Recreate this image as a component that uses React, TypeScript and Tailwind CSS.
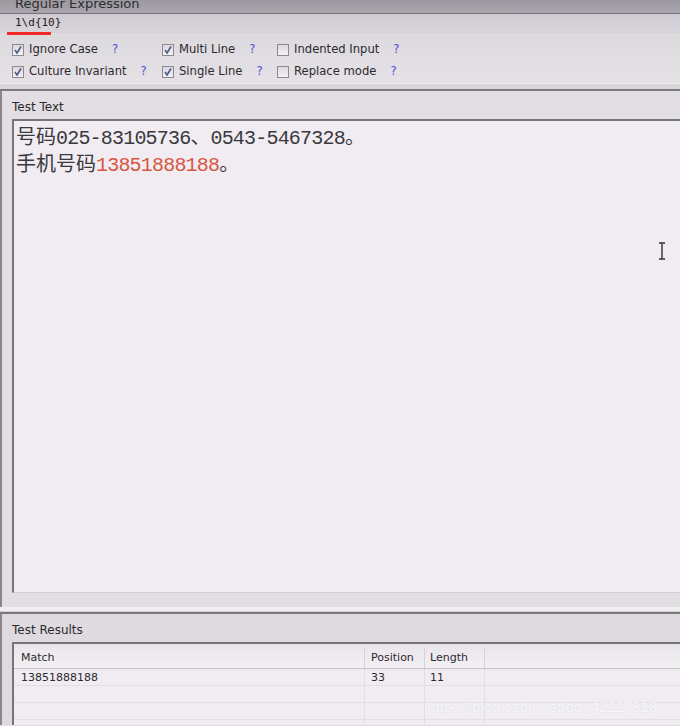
import React from "react";

const ui = "font-['DejaVu_Sans','Liberation_Sans',sans-serif]";

const options = [
  [
    { label: "Ignore Case", checked: true },
    { label: "Multi Line", checked: true },
    { label: "Indented Input", checked: false },
  ],
  [
    { label: "Culture Invariant", checked: true },
    { label: "Single Line", checked: true },
    { label: "Replace mode", checked: false },
  ],
];

const colX = ["w-[150px]", "w-[115px]", "w-[140px]"];

const Check = ({ checked }: { checked: boolean }) => (
  <span className="flex h-[12px] w-[12px] shrink-0 items-center justify-center border border-[#8d8991] bg-gradient-to-b from-[#dcd8de] to-[#f4f2f5]">
    {checked ? (
      <svg width="10" height="10" viewBox="0 0 10 10">
        <path d="M2 5 L4 8 L8 1.5" fill="none" stroke="#4a5a8c" strokeWidth="1.6" />
      </svg>
    ) : null}
  </span>
);

const rows = [
  { match: "13851888188", pos: "33", len: "11" },
  { match: "", pos: "", len: "" },
  { match: "", pos: "", len: "" },
  { match: "", pos: "", len: "" },
];

// half-width parts of the test text
const Ascii = ({ children, red }: { children: React.ReactNode; red?: boolean }) => (
  <span className={`font-['Liberation_Mono',monospace] tracking-[-0.8px] ${red ? "text-[#d8553f]" : ""}`}>
    {children}
  </span>
);

export default function App() {
  return (
    <div className={`relative flex h-[726px] w-[680px] flex-col overflow-hidden bg-[#e2dee3] text-[#2b2a2e] ${ui}`}>
      {/* Regular expression header */}
      <div className="h-[13px] shrink-0 overflow-hidden bg-gradient-to-b from-[#9c98a0] to-[#aaa6ad] pl-[15px]">
        <p className="-mt-[4px] text-[13px] leading-[16px] text-[#2e2c31]">Regular Expression</p>
      </div>
      <div className="h-px shrink-0 bg-[#76727a]" />
      <div className="flex h-[19px] shrink-0 items-center bg-gradient-to-b from-[#cfcbd2] to-[#d8d4da] pl-[15px] font-['DejaVu_Sans_Mono','Liberation_Mono',monospace] text-[11px] text-[#222]">
        1\d{"{10}"}
      </div>
      <div className="absolute left-[7px] top-[32px] h-[3px] w-[44px] bg-[#f22a2a]" />

      {/* Options */}
      <div className="flex h-[50px] shrink-0 flex-col bg-gradient-to-b from-[#dddade] to-[#e5e1e6] pt-[6px]">
        {options.map((row, r) => (
          <div key={r} className="flex h-[22px] items-center pl-[12px]">
            {row.map((o, i) => (
              <div key={i} className={`flex items-center gap-[5px] ${colX[i]}`}>
                <Check checked={o.checked} />
                <span className="whitespace-nowrap text-[11.6px]">{o.label}</span>
                <span className="ml-[9px] text-[11.6px] text-[#4f4fd8]">?</span>
              </div>
            ))}
          </div>
        ))}
      </div>
      <div className="h-px shrink-0 bg-[#f3f0f4]" />
      <div className="h-[5px] shrink-0 bg-[#d9d5db]" />
      <div className="h-[2px] shrink-0 bg-[#7c7880]" />

      {/* Test Text */}
      <div className="flex h-[516px] shrink-0 flex-col border-l-2 border-[#8a868d] bg-[#e2dee3] pb-[14px] pl-[10px]">
        <div className="h-[28px] shrink-0 pt-[9px] text-[12px] leading-[14px]">Test Text</div>
        <div className="relative min-h-0 flex-1 border-b border-l-2 border-t-2 border-b-[#d2ced4] border-l-[#77737b] border-t-[#77737b] bg-[#f0ecf2] pl-[2px] pt-[1px] font-['Noto_Sans_CJK_SC',sans-serif] text-[20px] leading-[27px] text-[#3a393d]">
          <p className="h-[27px] whitespace-nowrap">
            号码<Ascii>025-83105736</Ascii>、<Ascii>0543-5467328</Ascii>。
          </p>
          <p className="h-[27px] whitespace-nowrap">
            手机号码<Ascii red>13851888188</Ascii>。
          </p>
          <svg className="absolute left-[644px] top-[121px]" width="8" height="18" viewBox="0 0 8 18">
            <path d="M1 1 H7 M4 1 V17 M1 17 H7" fill="none" stroke="#333" strokeWidth="1.4" />
          </svg>
        </div>
      </div>
      <div className="h-[4px] shrink-0 bg-[#f1eef2]" />
      <div className="h-px shrink-0 bg-[#d4d0d6]" />
      <div className="h-[2px] shrink-0 bg-[#7c7880]" />

      {/* Test Results */}
      <div className="flex h-[111px] shrink-0 flex-col border-l-2 border-[#8a868d] bg-[#dedae0] pl-[10px]">
        <div className="h-[28px] shrink-0 pt-[9px] text-[12px] leading-[14px]">Test Results</div>
        <div className="min-h-0 flex-1 overflow-hidden border-l-2 border-t-2 border-[#77737b] bg-[#f0ecf2] text-[11px]">
          <div className="flex h-[25px] items-center border-b border-[#c6c2c8] bg-gradient-to-b from-[#e9e5eb] to-[#f3f0f4] pt-[4px]">
            <div className="flex h-full w-[351px] items-center border-r border-[#d6d2d8] pl-[7px]">Match</div>
            <div className="flex h-full w-[60px] items-center border-r border-[#d6d2d8] pl-[6px]">Position</div>
            <div className="flex h-full w-[60px] items-center border-r border-[#d6d2d8] pl-[5px]">Length</div>
          </div>
          {rows.map((r, i) => (
            <div key={i} className="flex h-[17px] border-b border-[#e2dee4]">
              <div className="flex w-[351px] items-center border-r border-[#e2dee4] pl-[7px] pt-[3px]">{r.match}</div>
              <div className="flex w-[60px] items-center border-r border-[#e2dee4] pl-[6px] pt-[3px]">{r.pos}</div>
              <div className="flex w-[60px] items-center border-r border-[#e2dee4] pl-[5px] pt-[3px]">{r.len}</div>
            </div>
          ))}
        </div>
      </div>

      <p className="absolute left-[427px] top-[696px] font-['Liberation_Sans',sans-serif] text-[15px] text-white/85 [text-shadow:0_0_1px_rgba(0,0,0,0.15)]">
        https://blog.csdn.net/qq_42227818
      </p>
    </div>
  );
}
